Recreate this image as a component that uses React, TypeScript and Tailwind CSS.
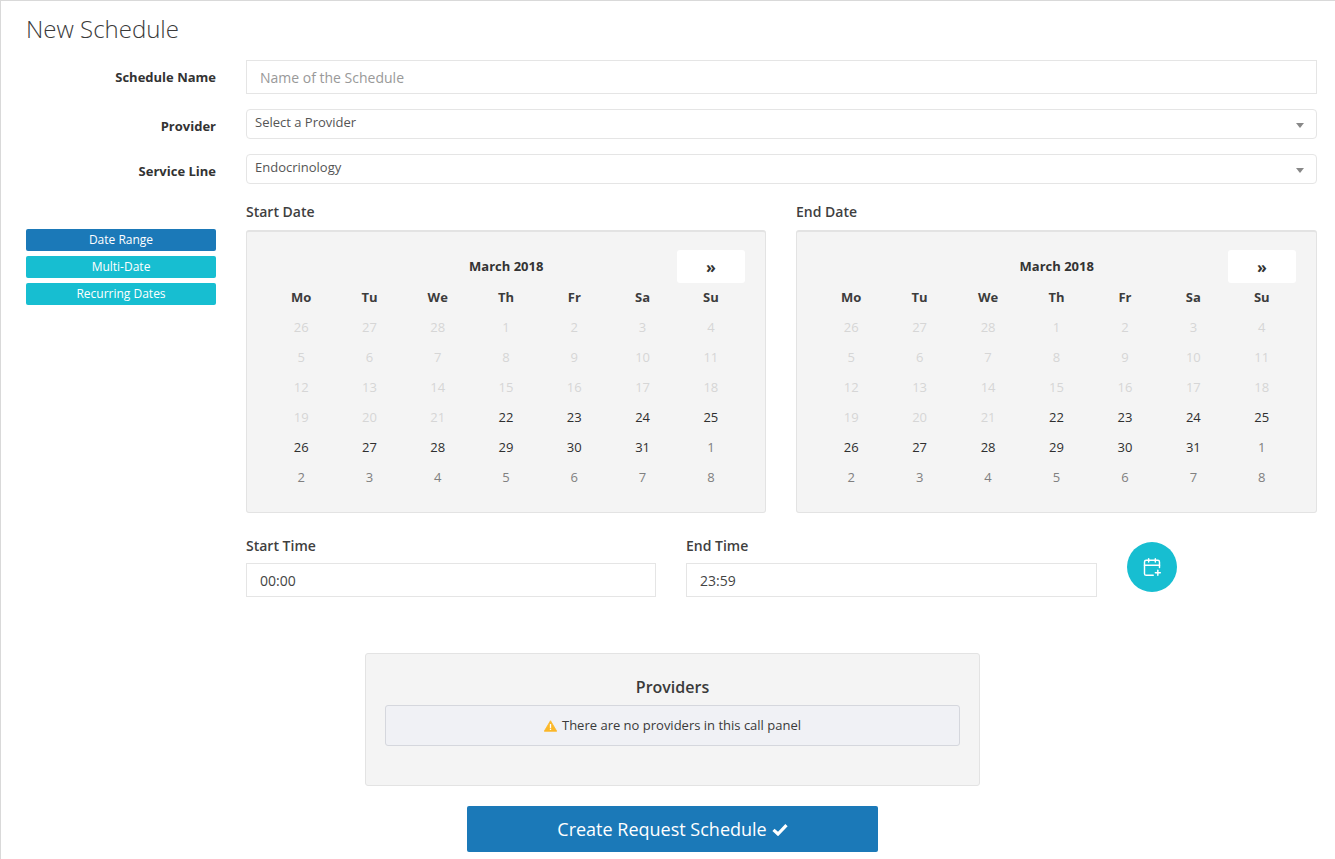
import React from "react";
import { CalendarPlus, ChevronDown } from "lucide-react";

const weekdays = ["Mo", "Tu", "We", "Th", "Fr", "Sa", "Su"];
type Day = { d: number; k: "off" | "on" | "next" };
const days: Day[] = [
  ...[26, 27, 28, 1, 2, 3, 4, 5, 6, 7, 8, 9, 10, 11, 12, 13, 14, 15, 16, 17, 18, 19, 20, 21].map((d) => ({ d, k: "off" as const })),
  ...[22, 23, 24, 25, 26, 27, 28, 29, 30, 31].map((d) => ({ d, k: "on" as const })),
  ...[1, 2, 3, 4, 5, 6, 7, 8].map((d) => ({ d, k: "next" as const })),
];

function Calendar({ label, wide }: { label: string; wide?: boolean }) {
  return (
    <div className={wide ? "w-[521px]" : "w-[520px]"}>
      <div className="h-[30px] pt-[2px] text-[14px] leading-[20px] font-semibold text-[#3f3f3f]">{label}</div>
      <div className="h-[283px] rounded-[3px] border border-[#e3e3e3] border-t-2 bg-[#f4f4f4] px-[20px] pt-[18px]">
        <div className="flex h-[33px] items-center">
          <div className="w-[68.5px]" />
          <div className="flex-1 text-center text-[13px] font-bold text-[#333]">March 2018</div>
          <div className="flex h-[33px] w-[68px] items-center justify-center rounded-[3px] bg-white text-[16px] font-bold text-[#333]">»</div>
        </div>
        <div className="grid grid-cols-7">
          {weekdays.map((w) => (
            <div key={w} className="flex h-[30px] items-center justify-center text-[13px] font-bold text-[#3c3c3c]">{w}</div>
          ))}
          {days.map((x, i) => (
            <div
              key={i}
              className={
                "flex h-[30px] items-center justify-center text-[13px] " +
                (x.k === "off" ? "text-[#d6d6d6]" : x.k === "on" ? "text-[#2f2f2f]" : "text-[#808080]")
              }
            >
              {x.d}
            </div>
          ))}
        </div>
      </div>
    </div>
  );
}

function Select({ text, mb }: { text: string; mb: string }) {
  return (
    <div className={"flex h-[30px] items-center justify-between rounded-[4px] border border-[#e5e5e5] bg-white pl-[8px] pr-[12px] " + mb}>
      <span className="pb-[3px] text-[13px] text-[#555]">{text}</span>
      <span className="mt-[2px] h-0 w-0 border-x-[4px] border-t-[5px] border-x-transparent border-t-[#888]" />
    </div>
  );
}

export default function App() {
  return (
    <div className="h-[859px] overflow-hidden border-l border-t-[1px] border-[#d9d9d9] bg-white font-['Open_Sans',sans-serif] text-[#333]">
      <div className="pl-[25px] pr-[18px]">
        <h1 className="h-[59px] pt-[10px] text-[24px] leading-[36px] font-light text-[#3a3a3a]">New Schedule</h1>

        <div className="flex gap-[30px]">
          <div className="w-[190px] shrink-0">
            <div className="h-[34px] pt-[6px] text-right text-[13px] leading-[22px] font-bold text-[#333]">Schedule Name</div>
            <div className="mt-[15px] h-[30px] pt-[6px] text-right text-[13px] leading-[22px] font-bold text-[#333]">Provider</div>
            <div className="mt-[15px] h-[30px] pt-[6px] text-right text-[13px] leading-[22px] font-bold text-[#333]">Service Line</div>
            <div className="mt-[45px] flex flex-col gap-[5px]">
              <div className="flex h-[22px] items-center justify-center rounded-[2px] bg-[#1b79b8] text-[12px] text-white">Date Range</div>
              <div className="flex h-[22px] items-center justify-center rounded-[2px] bg-[#17bed1] text-[12px] text-white">Multi-Date</div>
              <div className="flex h-[22px] items-center justify-center rounded-[2px] bg-[#17bed1] text-[12px] text-white">Recurring Dates</div>
            </div>
          </div>

          <div className="w-[1071px]">
            <div className="mb-[15px] flex h-[34px] items-center border border-[#e5e5e5] bg-white px-[13px] text-[14px] text-[#999]">Name of the Schedule</div>
            <Select text="Select a Provider" mb="mb-[15px]" />
            <Select text="Endocrinology" mb="mb-[16px]" />
            <div className="flex gap-[30px]">
              <Calendar label="Start Date" />
              <Calendar label="End Date" wide />
            </div>
            <div className="mt-[22px] flex gap-[30px]">
              <div className="w-[410px]">
                <div className="h-[28px] text-[14px] leading-[22px] font-semibold text-[#3f3f3f]">Start Time</div>
                <div className="flex h-[34px] items-center border border-[#e5e5e5] bg-white px-[13px] text-[14px] text-[#444]">00:00</div>
              </div>
              <div className="w-[411px]">
                <div className="h-[28px] text-[14px] leading-[22px] font-semibold text-[#3f3f3f]">End Time</div>
                <div className="flex h-[34px] items-center border border-[#e5e5e5] bg-white px-[13px] text-[14px] text-[#444]">23:59</div>
              </div>
              <div className="pt-[7px]">
                <div className="flex h-[50px] w-[50px] items-center justify-center rounded-full bg-[#17bed1]">
                  <CalendarPlus className="h-[20px] w-[20px] text-white" strokeWidth={1.75} />
                </div>
              </div>
            </div>
          </div>
        </div>

        <div className="ml-[339px] mt-[56px] h-[133px] w-[615px] rounded-[3px] border border-[#e3e3e3] bg-[#f4f4f4] px-[19px] pt-[21px]">
          <div className="h-[30px] text-center text-[16px] leading-[24px] font-semibold text-[#3a3a3a]">Providers</div>
          <div className="flex h-[41px] items-center justify-center gap-[5px] rounded-[3px] border border-[#d5d7dd] bg-[#f0f1f5] text-[13px] text-[#3a3a3a]">
            <svg viewBox="0 0 16 14" className="h-[12px] w-[13px]">
              <path d="M8 0.5 L15.7 13.5 H0.3 Z" fill="#fbb829" stroke="#fbb829" strokeLinejoin="round" />
              <rect x="7.2" y="4.6" width="1.6" height="4.8" fill="#fff" />
              <rect x="7.2" y="10.3" width="1.6" height="1.6" fill="#fff" />
            </svg>
            <span>There are no providers in this call panel</span>
          </div>
        </div>

        <div className="ml-[441px] mt-[20px] flex h-[46px] w-[411px] items-center justify-center gap-[5px] rounded-[2px] bg-[#1b79b8] text-[18px] text-white">
          <span>Create Request Schedule</span>
          <svg viewBox="0 0 16 13" className="h-[13px] w-[16px]">
            <path d="M1.5 6.8 L6 11 L14.5 2.2" fill="none" stroke="#fff" strokeWidth="3.2" />
          </svg>
        </div>
      </div>
    </div>
  );
}
